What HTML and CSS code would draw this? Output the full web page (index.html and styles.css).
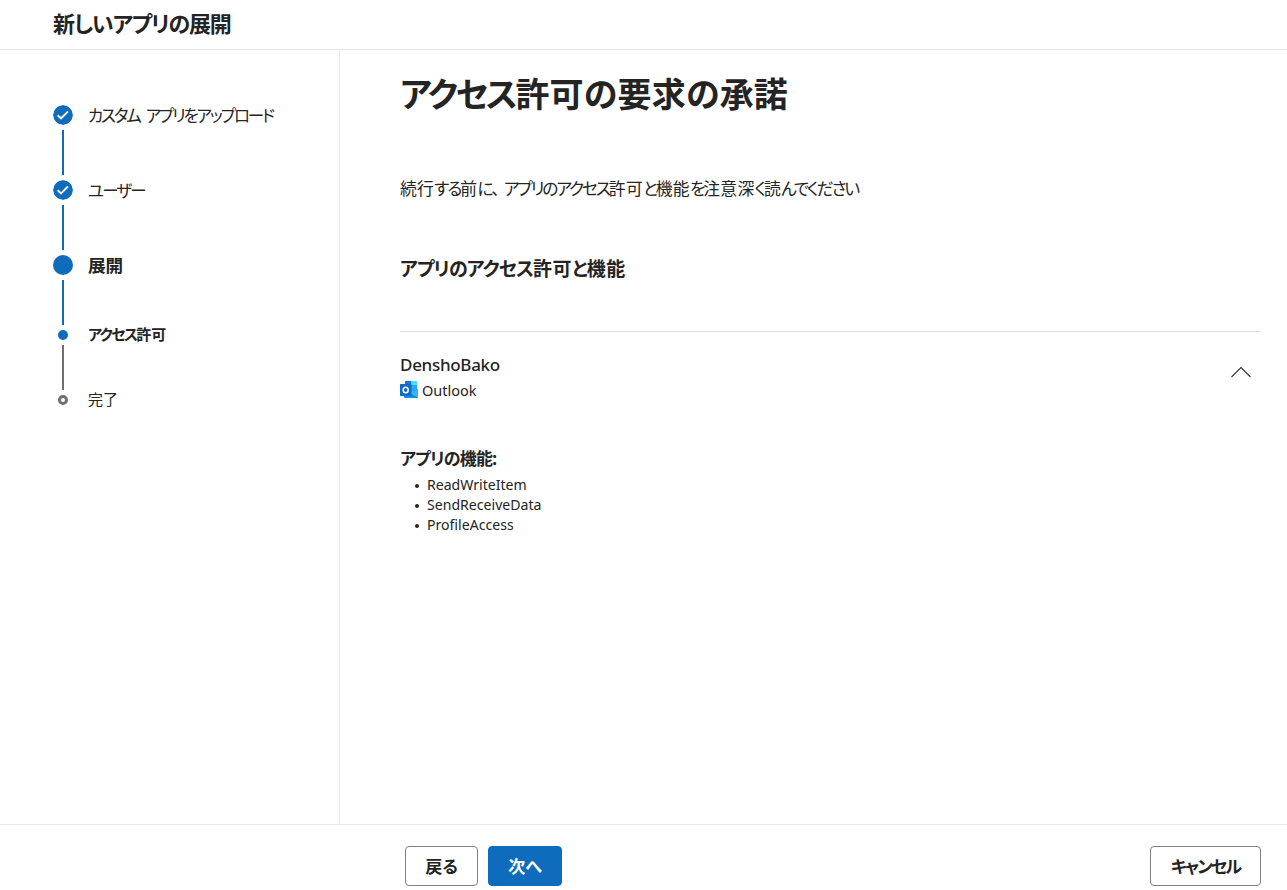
FILE: index.html
```html
<!DOCTYPE html>
<html lang="ja">
<head>
<meta charset="UTF-8">
<meta name="viewport" content="width=device-width, initial-scale=1.0">
<title>新しいアプリの展開</title>
<link rel="stylesheet" href="styles.css">
</head>
<body>
<header class="header">
    <div class="header-title">新しいアプリの展開</div>
</header>

<div class="container">
    <!-- ステップ一覧 -->
    <nav class="steps">
        <div class="step">
            <div class="step-mark">
                <svg class="dot" viewBox="0 0 20 20"><circle cx="10" cy="10" r="10" fill="#0f6cbd"/><path d="M4.7 10.3l3.3 3.1 7-7" fill="none" stroke="#fff" stroke-width="2"/></svg>
                <span class="line"></span>
            </div>
            <span class="step-label upload">カスタム アプリをアップロード</span>
        </div>
        <div class="step">
            <div class="step-mark">
                <svg class="dot" viewBox="0 0 20 20"><circle cx="10" cy="10" r="10" fill="#0f6cbd"/><path d="M4.7 10.3l3.3 3.1 7-7" fill="none" stroke="#fff" stroke-width="2"/></svg>
                <span class="line"></span>
            </div>
            <span class="step-label users">ユーザー</span>
        </div>
        <div class="step">
            <div class="step-mark">
                <span class="dot filled"></span>
                <span class="line"></span>
            </div>
            <span class="step-label current">展開</span>
        </div>
        <div class="step sub">
            <div class="step-mark">
                <span class="dot small filled"></span>
                <span class="line gray"></span>
            </div>
            <span class="step-label sub-current"><span class="kana">アクセス</span>許可</span>
        </div>
        <div class="step sub">
            <div class="step-mark">
                <span class="dot small empty"></span>
            </div>
            <span class="step-label finish">完了</span>
        </div>
    </nav>

    <main class="content">
        <h1><span class="kana">アクセス</span>許可の要求の承諾</h1>
        <p class="lead">続行<span class="kana">する</span>前<span class="kana">に</span><span class="comma">、</span><span class="kana">アプリのアクセス</span>許可<span class="kana">と</span>機能<span class="kana">を</span>注意深<span class="kana">く</span>読<span class="kana">んでください</span></p>
        <h2><span class="kana">アプリのアクセス</span>許可<span class="kana">と</span>機能</h2>

        <section class="app">
            <div class="app-head">
                <div>
                    <div class="app-name">DenshoBako</div>
                    <div class="app-host">
                        <svg class="outlook" viewBox="0 0 18 18">
                            <path d="M5 0h12v11H5z" fill="#28a8ea"/>
                            <path d="M5 0h6v4H5z" fill="#0f78d4"/>
                            <path d="M11 0h6v4h-6z" fill="#50d9ff"/>
                            <path d="M4 8l7 4 7-4v8.3q0 .7-.7.7H5q-1 0-1-1z" fill="#1490df"/>
                            <path d="M18 8v8.5L10 12z" fill="#35b8f1"/>
                            <rect y="3" width="11.5" height="12" rx=".8" fill="#0f6cc4"/>
                            <ellipse cx="5.7" cy="9" rx="2.5" ry="2.8" fill="none" stroke="#fff" stroke-width="1.5"/>
                        </svg>
                        <span>Outlook</span>
                    </div>
                </div>
                <svg class="chevron" viewBox="0 0 20 12"><path d="M.5 11L10 1.5l9.5 9.5" fill="none" stroke="#333" stroke-width="1.1"/></svg>
            </div>
            <h3>アプリの機能:</h3>
            <ul>
                <li>ReadWriteItem</li>
                <li>SendReceiveData</li>
                <li>ProfileAccess</li>
            </ul>
        </section>
    </main>
</div>

<footer class="footer">
    <div class="footer-left">
        <button type="button" class="btn back">戻る</button>
        <button type="button" class="btn primary">次へ</button>
    </div>
    <button type="button" class="btn cancel">キャンセル</button>
</footer>
</body>
</html>
```
FILE: styles.css
```css
* {
    box-sizing: border-box;
}
body {
    margin: 0;
    height: 100vh;
    display: flex;
    flex-direction: column;
    overflow: hidden;
    background-color: #fff;
    color: #242424;
    font-family: "Noto Sans", "Noto Sans CJK JP", sans-serif;
    font-feature-settings: "palt";
    white-space: nowrap;
}
h1, h2, h3, p, ul {
    margin: 0;
}
.header {
    height: 50px;
    padding-left: 53px;
    border-bottom: 1px solid #e8e8e8;
}
.header-title {
    font-size: 22px;
    font-weight: bold;
    line-height: 47px;
    letter-spacing: -1.2px;
}
.container {
    flex: 1;
    display: flex;
}
.steps {
    width: 340px;
    padding: 55px 0 0 53px;
    border-right: 1px solid #e8e8e8;
}
.step {
    display: flex;
    gap: 15px;
    height: 75px;
}
.step.sub {
    height: 65px;
}
.step-mark {
    width: 20px;
    display: flex;
    flex-direction: column;
    align-items: center;
    gap: 5px;
}
.dot {
    width: 20px;
    height: 20px;
    border-radius: 50%;
}
.dot.small {
    width: 10px;
    height: 10px;
}
.filled {
    background-color: #0f6cbd;
}
.empty {
    border: 3px solid #707070;
}
.line {
    width: 2px;
    height: 45px;
    background-color: #0f6cbd;
}
.line.gray {
    background-color: #707070;
}
.step-label {
    font-size: 16.5px;
    line-height: 22px;
}
.sub .step-label {
    font-size: 15px;
    line-height: 8px;
}
.upload {
    letter-spacing: -2.1px;
    word-spacing: 4px;
}
.users {
    letter-spacing: -1.8px;
}
.current, .sub-current {
    font-weight: bold;
}
.step .current {
    font-size: 17.6px;
    line-height: 20px;
}
.sub-current .kana {
    letter-spacing: -1.7px;
}
.content {
    flex: 1;
    padding: 19px 26px 0 60px;
}
h1 {
    font-size: 34px;
    line-height: 50px;
    letter-spacing: 0.2px;
}
h1 .kana {
    letter-spacing: -2.4px;
}
.lead {
    margin-top: 56px;
    font-size: 16.8px;
    line-height: 27px;
    letter-spacing: 0.3px;
}
.lead .kana {
    letter-spacing: -2.1px;
}
.lead .comma {
    letter-spacing: 4px;
}
h2 {
    margin-top: 53px;
    font-size: 19px;
    line-height: 28px;
    letter-spacing: 0.4px;
}
h2 .kana {
    letter-spacing: -0.9px;
}
.app {
    margin-top: 48px;
    border-top: 1px solid #dedede;
}
.app-head {
    display: flex;
    justify-content: space-between;
    padding: 21px 10px 0 0;
}
.app-name {
    font-size: 17px;
    font-weight: 500;
    line-height: 24px;
    letter-spacing: -0.3px;
}
.app-host {
    display: flex;
    gap: 4px;
    margin-top: 2px;
    font-size: 14.5px;
    line-height: 23px;
}
.outlook {
    width: 18px;
    height: 18px;
    margin-top: 2px;
}
.chevron {
    width: 20px;
    height: 12px;
    margin-top: 13px;
}
h3 {
    margin-top: 45px;
    font-size: 17px;
    line-height: 24px;
    letter-spacing: -0.8px;
}
ul {
    margin-top: 4px;
    padding-left: 15px;
    font-size: 14.1px;
    line-height: 20px;
    list-style: none;
}
li {
    display: flex;
    align-items: center;
    gap: 8px;
}
li::before {
    content: "";
    width: 4px;
    height: 4px;
    margin-top: 2px;
    border-radius: 50%;
    background-color: #242424;
}
.footer {
    height: 66px;
    display: flex;
    justify-content: space-between;
    padding: 21px 26px 0 405px;
    border-top: 1px solid #e8e8e8;
}
.footer-left {
    display: flex;
    gap: 10px;
}
.btn {
    height: 40px;
    padding: 0 0 2px;
    border: 1px solid #808080;
    border-radius: 4px;
    background-color: #fff;
    color: #242424;
    font-family: inherit;
    font-feature-settings: inherit;
    font-size: 17px;
    font-weight: bold;
    cursor: pointer;
}
.back {
    width: 73px;
}
.primary {
    width: 74px;
    border-color: #0f6cbd;
    background-color: #0f6cbd;
    color: #fff;
}
.cancel {
    width: 111px;
    letter-spacing: -1.8px;
}
```
